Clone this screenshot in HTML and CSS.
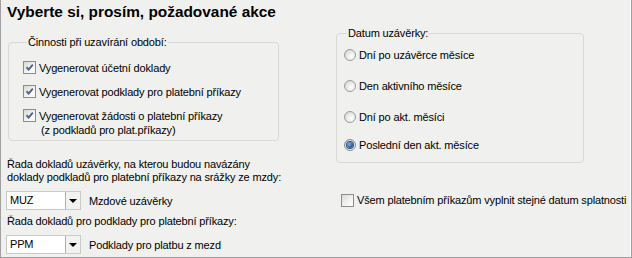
FILE: index.html
```html
<!DOCTYPE html>
<html lang="cs">
<head>
<meta charset="utf-8">
<link rel="stylesheet" href="styles.css">
</head>
<body>
<div class="panel">
  <div class="title">Vyberte si, prosím, požadované akce</div>
  <div class="columns">
    <div class="left">
      <fieldset class="group group-left">
        <legend>Činnosti při uzavírání období:</legend>
        <div class="check-row first">
          <span class="cb checked"><svg viewBox="0 0 11 11" width="11" height="11"><path d="M2.5 5.2 L4.6 7.6 L8.8 2.6" fill="none" stroke="#4b5e86" stroke-width="1.8"/></svg></span>
          <span class="lbl">Vygenerovat účetní doklady</span>
        </div>
        <div class="check-row">
          <span class="cb checked"><svg viewBox="0 0 11 11" width="11" height="11"><path d="M2.5 5.2 L4.6 7.6 L8.8 2.6" fill="none" stroke="#4b5e86" stroke-width="1.8"/></svg></span>
          <span class="lbl">Vygenerovat podklady pro platební příkazy</span>
        </div>
        <div class="check-row">
          <span class="cb checked"><svg viewBox="0 0 11 11" width="11" height="11"><path d="M2.5 5.2 L4.6 7.6 L8.8 2.6" fill="none" stroke="#4b5e86" stroke-width="1.8"/></svg></span>
          <span class="lbl">Vygenerovat žádosti o platební příkazy<br><span class="indent">(z podkladů pro plat.příkazy)</span></span>
        </div>
      </fieldset>
      <div class="field-label two-line">Řada dokladů uzávěrky, na kterou budou navázány<br>doklady podkladů pro platební příkazy na srážky ze mzdy:</div>
      <div class="combo-row">
        <div class="combo"><span class="combo-text">MUZ</span><span class="combo-btn"><span class="arrow"></span></span></div>
        <span class="combo-desc">Mzdové uzávěrky</span>
      </div>
      <div class="field-label single">Řada dokladů pro podklady pro platební příkazy:</div>
      <div class="combo-row">
        <div class="combo"><span class="combo-text">PPM</span><span class="combo-btn"><span class="arrow"></span></span></div>
        <span class="combo-desc">Podklady pro platbu z mezd</span>
      </div>
    </div>
    <div class="right">
      <fieldset class="group group-right">
        <legend>Datum uzávěrky:</legend>
        <div class="radio-row r1"><span class="radio"></span><span class="lbl">Dní po uzávěrce měsíce</span></div>
        <div class="radio-row r2"><span class="radio"></span><span class="lbl">Den aktivního měsíce</span></div>
        <div class="radio-row r3"><span class="radio"></span><span class="lbl">Dní po akt. měsíci</span></div>
        <div class="radio-row r4"><span class="radio selected"><span class="dot"></span></span><span class="lbl">Poslední den akt. měsíce</span></div>
      </fieldset>
      <div class="bottom-check">
        <span class="cb"></span>
        <span class="lbl">Všem platebním příkazům vyplnit stejné datum splatnosti</span>
      </div>
    </div>
  </div>
</div>
</body>
</html>
```

FILE: styles.css
```css
* { box-sizing: border-box; }
html, body { margin: 0; padding: 0; }
body {
  width: 632px;
  height: 258px;
  background: #f0f0ee;
  font-family: "Liberation Sans", Arial, sans-serif;
  font-size: 11px;
  letter-spacing: -0.15px;
  color: #000;
  overflow: hidden;
  white-space: nowrap;
}
.panel {
  width: 632px;
  height: 258px;
  border-left: 1px solid #a0a0a0;
  border-right: 1px solid #a0a0a0;
  border-bottom: 1px solid #a0a0a0;
  box-shadow: inset -1px 0 0 #ffffff;
  background: #f0f0ee;
}
.title {
  font-weight: bold;
  font-size: 15.4px;
  letter-spacing: 0;
  line-height: 17px;
  padding: 3px 0 0 6px;
  height: 24px;
}
.columns {
  display: flex;
  padding-left: 6px;
}
.left { width: 274px; }
.right { margin-left: 55px; width: 290px; }

.group {
  margin: 0;
  border: 1px solid #d8d8d4;
  border-radius: 4px;
}
.group legend {
  padding: 0 1px;
  line-height: 13px;
  margin-left: 4px;
}
.group-left {
  margin-top: 12px;
  margin-left: 1px;
  width: 271px;
  padding: 6px 0 3px 14px;
}
.group-right {
  margin-top: 3px;
  width: 248px;
  padding: 0 0 7px 6px;
  height: 136px;
}

.check-row {
  display: flex;
  align-items: flex-start;
  line-height: 14px;
  margin-top: 10px;
}
.check-row.first { margin-top: 6px; }
.cb {
  flex: none;
  width: 13px;
  height: 13px;
  border: 1px solid #8c8c8c;
  background: linear-gradient(135deg, #d9d9d6 0%, #f4f4f2 60%, #ffffff 100%);
  margin-right: 3px;
  display: flex;
  align-items: center;
  justify-content: center;
}
.cb svg { display: block; }
.indent { padding-left: 2px; }

.radio-row {
  display: flex;
  align-items: center;
  line-height: 14px;
}
.r1 { margin-top: 8px; }
.r2 { margin-top: 17px; }
.r3 { margin-top: 17px; }
.r4 { margin-top: 14px; }
.radio {
  flex: none;
  width: 12px;
  height: 12px;
  border-radius: 50%;
  border: 1px solid #9c9c9c;
  background: radial-gradient(circle at 65% 65%, #ffffff 0%, #e6e6e3 55%, #c8c8c4 100%);
  margin: 0 3px 0 1px;
  display: flex;
  align-items: center;
  justify-content: center;
}
.radio.selected { border-color: #7d8fa5; }
.dot {
  width: 6px;
  height: 6px;
  border-radius: 50%;
  background: radial-gradient(circle at 35% 35%, #7fb2e8 0%, #2b62a8 60%, #163e75 100%);
  box-shadow: 0 0 0 1px #3a4f6a;
}

.bottom-check {
  display: flex;
  align-items: center;
  line-height: 14px;
  margin-top: 30px;
  margin-left: 5px;
}

.field-label { line-height: 13px; }
.two-line { margin-top: 17px; }
.single { margin-top: 5px; }
.combo-row {
  display: flex;
  align-items: center;
  margin-top: 7px;
  height: 19px;
}
.combo {
  display: flex;
  width: 75px;
  height: 19px;
  border: 1px solid #cacac8;
  background: #fff;
  margin-left: -1px;
}
.combo-text {
  flex: 1;
  line-height: 17px;
  padding-left: 3px;
}
.combo-btn {
  width: 15px;
  border-left: 1px solid #b0b0b0;
  background: #f2f2f0;
  display: flex;
  align-items: center;
  justify-content: center;
}
.arrow {
  width: 0;
  height: 0;
  border-left: 4px solid transparent;
  border-right: 4px solid transparent;
  border-top: 4px solid #000;
}
.combo-desc { margin-left: 8px; }
```
